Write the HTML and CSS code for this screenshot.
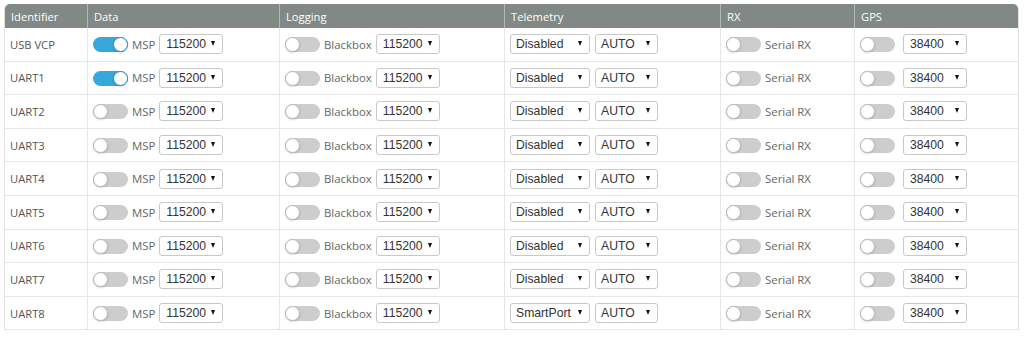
FILE: index.html
```html
<!DOCTYPE html>
<html lang="en">
<head>
    <meta charset="UTF-8">
    <meta name="viewport" content="width=device-width, initial-scale=1.0">
    <title>Ports</title>
    <link rel="stylesheet" href="styles.css">
</head>
<body>
<div class="ports">
<table class="portTable">
    <thead>
        <tr>
            <th class="c-id">Identifier</th>
            <th class="c-data">Data</th>
            <th class="c-log">Logging</th>
            <th class="c-tel">Telemetry</th>
            <th class="c-rx">RX</th>
            <th class="c-gps">GPS</th>
        </tr>
    </thead>
    <tbody>
        <tr>
            <td class="ident">USB VCP</td>
            <td><div class="cell"><span class="switch on"><span class="knob"></span></span><span class="lbl">MSP</span><span class="sel baud">115200<i class="caret"></i></span></div></td>
            <td><div class="cell"><span class="switch"><span class="knob"></span></span><span class="lbl">Blackbox</span><span class="sel baud">115200<i class="caret"></i></span></div></td>
            <td><div class="cell wide"><span class="sel proto">Disabled<i class="caret"></i></span><span class="sel auto">AUTO<i class="caret"></i></span></div></td>
            <td><div class="cell"><span class="switch"><span class="knob"></span></span><span class="lbl">Serial RX</span></div></td>
            <td><div class="cell gps"><span class="switch"><span class="knob"></span></span><span class="sel baud">38400<i class="caret"></i></span></div></td>
        </tr>
        <tr>
            <td class="ident">UART1</td>
            <td><div class="cell"><span class="switch on"><span class="knob"></span></span><span class="lbl">MSP</span><span class="sel baud">115200<i class="caret"></i></span></div></td>
            <td><div class="cell"><span class="switch"><span class="knob"></span></span><span class="lbl">Blackbox</span><span class="sel baud">115200<i class="caret"></i></span></div></td>
            <td><div class="cell wide"><span class="sel proto">Disabled<i class="caret"></i></span><span class="sel auto">AUTO<i class="caret"></i></span></div></td>
            <td><div class="cell"><span class="switch"><span class="knob"></span></span><span class="lbl">Serial RX</span></div></td>
            <td><div class="cell gps"><span class="switch"><span class="knob"></span></span><span class="sel baud">38400<i class="caret"></i></span></div></td>
        </tr>
        <tr>
            <td class="ident">UART2</td>
            <td><div class="cell"><span class="switch"><span class="knob"></span></span><span class="lbl">MSP</span><span class="sel baud">115200<i class="caret"></i></span></div></td>
            <td><div class="cell"><span class="switch"><span class="knob"></span></span><span class="lbl">Blackbox</span><span class="sel baud">115200<i class="caret"></i></span></div></td>
            <td><div class="cell wide"><span class="sel proto">Disabled<i class="caret"></i></span><span class="sel auto">AUTO<i class="caret"></i></span></div></td>
            <td><div class="cell"><span class="switch"><span class="knob"></span></span><span class="lbl">Serial RX</span></div></td>
            <td><div class="cell gps"><span class="switch"><span class="knob"></span></span><span class="sel baud">38400<i class="caret"></i></span></div></td>
        </tr>
        <tr>
            <td class="ident">UART3</td>
            <td><div class="cell"><span class="switch"><span class="knob"></span></span><span class="lbl">MSP</span><span class="sel baud">115200<i class="caret"></i></span></div></td>
            <td><div class="cell"><span class="switch"><span class="knob"></span></span><span class="lbl">Blackbox</span><span class="sel baud">115200<i class="caret"></i></span></div></td>
            <td><div class="cell wide"><span class="sel proto">Disabled<i class="caret"></i></span><span class="sel auto">AUTO<i class="caret"></i></span></div></td>
            <td><div class="cell"><span class="switch"><span class="knob"></span></span><span class="lbl">Serial RX</span></div></td>
            <td><div class="cell gps"><span class="switch"><span class="knob"></span></span><span class="sel baud">38400<i class="caret"></i></span></div></td>
        </tr>
        <tr>
            <td class="ident">UART4</td>
            <td><div class="cell"><span class="switch"><span class="knob"></span></span><span class="lbl">MSP</span><span class="sel baud">115200<i class="caret"></i></span></div></td>
            <td><div class="cell"><span class="switch"><span class="knob"></span></span><span class="lbl">Blackbox</span><span class="sel baud">115200<i class="caret"></i></span></div></td>
            <td><div class="cell wide"><span class="sel proto">Disabled<i class="caret"></i></span><span class="sel auto">AUTO<i class="caret"></i></span></div></td>
            <td><div class="cell"><span class="switch"><span class="knob"></span></span><span class="lbl">Serial RX</span></div></td>
            <td><div class="cell gps"><span class="switch"><span class="knob"></span></span><span class="sel baud">38400<i class="caret"></i></span></div></td>
        </tr>
        <tr>
            <td class="ident">UART5</td>
            <td><div class="cell"><span class="switch"><span class="knob"></span></span><span class="lbl">MSP</span><span class="sel baud">115200<i class="caret"></i></span></div></td>
            <td><div class="cell"><span class="switch"><span class="knob"></span></span><span class="lbl">Blackbox</span><span class="sel baud">115200<i class="caret"></i></span></div></td>
            <td><div class="cell wide"><span class="sel proto">Disabled<i class="caret"></i></span><span class="sel auto">AUTO<i class="caret"></i></span></div></td>
            <td><div class="cell"><span class="switch"><span class="knob"></span></span><span class="lbl">Serial RX</span></div></td>
            <td><div class="cell gps"><span class="switch"><span class="knob"></span></span><span class="sel baud">38400<i class="caret"></i></span></div></td>
        </tr>
        <tr>
            <td class="ident">UART6</td>
            <td><div class="cell"><span class="switch"><span class="knob"></span></span><span class="lbl">MSP</span><span class="sel baud">115200<i class="caret"></i></span></div></td>
            <td><div class="cell"><span class="switch"><span class="knob"></span></span><span class="lbl">Blackbox</span><span class="sel baud">115200<i class="caret"></i></span></div></td>
            <td><div class="cell wide"><span class="sel proto">Disabled<i class="caret"></i></span><span class="sel auto">AUTO<i class="caret"></i></span></div></td>
            <td><div class="cell"><span class="switch"><span class="knob"></span></span><span class="lbl">Serial RX</span></div></td>
            <td><div class="cell gps"><span class="switch"><span class="knob"></span></span><span class="sel baud">38400<i class="caret"></i></span></div></td>
        </tr>
        <tr>
            <td class="ident">UART7</td>
            <td><div class="cell"><span class="switch"><span class="knob"></span></span><span class="lbl">MSP</span><span class="sel baud">115200<i class="caret"></i></span></div></td>
            <td><div class="cell"><span class="switch"><span class="knob"></span></span><span class="lbl">Blackbox</span><span class="sel baud">115200<i class="caret"></i></span></div></td>
            <td><div class="cell wide"><span class="sel proto">Disabled<i class="caret"></i></span><span class="sel auto">AUTO<i class="caret"></i></span></div></td>
            <td><div class="cell"><span class="switch"><span class="knob"></span></span><span class="lbl">Serial RX</span></div></td>
            <td><div class="cell gps"><span class="switch"><span class="knob"></span></span><span class="sel baud">38400<i class="caret"></i></span></div></td>
        </tr>
        <tr>
            <td class="ident">UART8</td>
            <td><div class="cell"><span class="switch"><span class="knob"></span></span><span class="lbl">MSP</span><span class="sel baud">115200<i class="caret"></i></span></div></td>
            <td><div class="cell"><span class="switch"><span class="knob"></span></span><span class="lbl">Blackbox</span><span class="sel baud">115200<i class="caret"></i></span></div></td>
            <td><div class="cell wide"><span class="sel proto">SmartPort<i class="caret"></i></span><span class="sel auto">AUTO<i class="caret"></i></span></div></td>
            <td><div class="cell"><span class="switch"><span class="knob"></span></span><span class="lbl">Serial RX</span></div></td>
            <td><div class="cell gps"><span class="switch"><span class="knob"></span></span><span class="sel baud">38400<i class="caret"></i></span></div></td>
        </tr>
    </tbody>
</table>
</div>
</body>
</html>
```
FILE: styles.css
```css
body{
    margin: 0;
    background-color: white;
    font-family: "Open Sans", "Liberation Sans", sans-serif;
}
.ports{
    padding: 4px;
}
.portTable{
    width: 1013px;
    border-collapse: separate;
    border-spacing: 0;
    table-layout: fixed;
    border-left: 1px solid #e2e2e2;
    border-right: 1px solid #e2e2e2;
    border-radius: 5px 5px 0 0;
}
.portTable th{
    background-color: #828885;
    color: white;
    font-weight: normal;
    font-size: 11.2px;
    text-align: left;
    height: 24px;
    padding: 0 0 0 6px;
    border-left: 1px solid #b3b7b5;
    box-sizing: border-box;
}
.portTable th:first-child{
    border-left: none;
    border-top-left-radius: 5px;
}
.portTable th:last-child{
    border-top-right-radius: 5px;
}
.c-id{ width: 82px; }
.c-data{ width: 192px; }
.c-log{ width: 225px; }
.c-tel{ width: 216px; }
.c-rx{ width: 134px; }
.c-gps{ width: 164px; }

.portTable td{
    height: 33.6px;
    padding: 0 0 0 5px;
    border-left: 1px solid #e6e6e6;
    border-bottom: 1px solid #e6e6e6;
    box-sizing: border-box;
    vertical-align: middle;
}
.portTable td:first-child{
    border-left: none;
}
.portTable td.ident{
    font-size: 11.2px;
    color: #555;
}
.cell{
    display: flex;
    align-items: center;
    gap: 4px;
}
.cell.wide{
    gap: 5px;
}
.cell.gps{
    gap: 8px;
}
.lbl{
    font-size: 11.4px;
    color: #666;
}

/* switch */
.switch{
    display: inline-flex;
    justify-content: flex-start;
    width: 35px;
    height: 15px;
    border-radius: 8px;
    background-color: #cdcdcd;
    margin-top: 1px;
}
.switch.on{
    justify-content: flex-end;
    background-color: #37a8db;
}
.knob{
    width: 15px;
    height: 15px;
    box-sizing: border-box;
    border-radius: 50%;
    background-color: white;
    border: 1px solid #b9b9b9;
    box-shadow: 0 1px 2px rgba(0,0,0,0.15);
}
.switch.on .knob{
    border-color: #2d8fbd;
}

/* select box */
.sel{
    display: inline-flex;
    align-items: center;
    justify-content: space-between;
    box-sizing: border-box;
    height: 20px;
    padding: 0 7px 0 6px;
    border: 1px solid #c8c8c8;
    border-radius: 3px;
    background-color: white;
    font-family: "Liberation Sans", Arial, sans-serif;
    font-size: 12.2px;
    color: #333;
}
.sel.baud{ width: 64px; }
.sel.proto{ width: 80px; padding-left: 5px; }
.sel.auto{ width: 63px; padding-left: 5px; }
.caret{
    width: 0;
    height: 0;
    border-left: 2.5px solid transparent;
    border-right: 2.5px solid transparent;
    border-top: 5px solid #111;
    margin-top: -1px;
}
```
